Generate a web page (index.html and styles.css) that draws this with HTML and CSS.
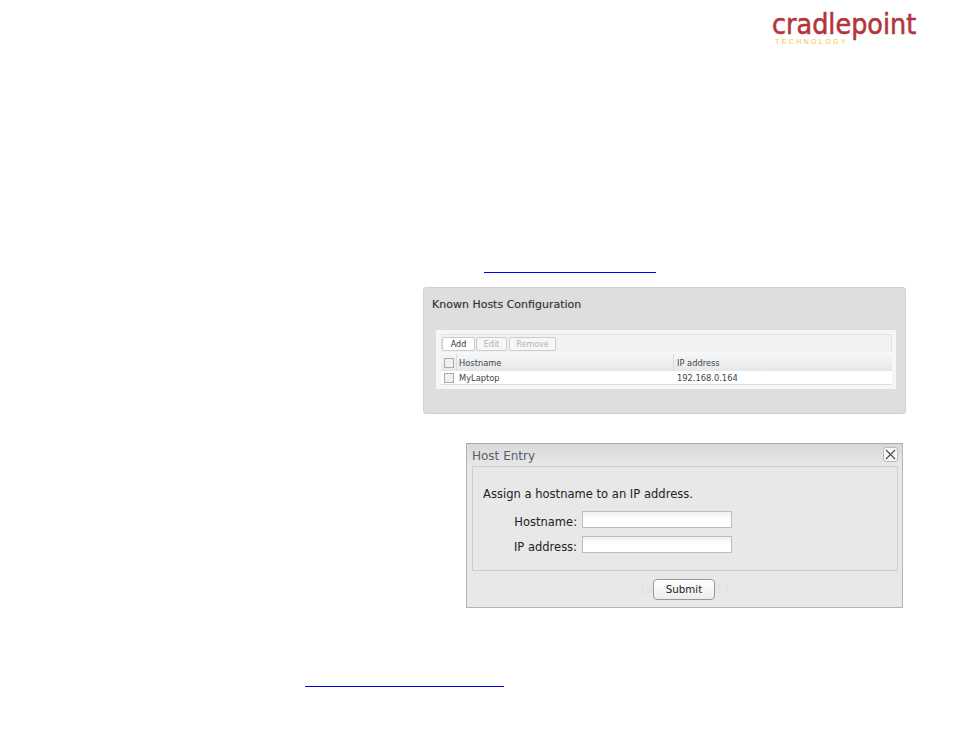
FILE: index.html
```html
<!DOCTYPE html>
<html lang="en">
<head>
    <meta charset="UTF-8">
    <title>Known Hosts - Cradlepoint</title>
    <link rel="stylesheet" href="styles.css">
</head>
<body>
    <header class="logo">
        <div class="logo-name">cradlepoint</div>
        <div class="logo-sub">TECHNOLOGY</div>
    </header>

    <div class="link-line link-top"></div>

    <section class="hosts">
        <h2 class="hosts-title">Known Hosts Configuration</h2>
        <div class="grid-panel">
            <div class="toolbar">
                <button class="tool-btn btn-add">Add</button>
                <button class="tool-btn btn-edit" disabled>Edit</button>
                <button class="tool-btn btn-remove" disabled>Remove</button>
            </div>
            <div class="grid-row grid-head">
                <span class="check-cell"><i class="check"></i></span>
                <span class="name-cell">Hostname</span>
                <span class="ip-cell">IP address</span>
            </div>
            <div class="grid-row grid-body">
                <span class="check-cell"><i class="check"></i></span>
                <span class="name-cell">MyLaptop</span>
                <span class="ip-cell">192.168.0.164</span>
            </div>
        </div>
    </section>

    <section class="dialog">
        <div class="dialog-head">
            <span class="dialog-title">Host Entry</span>
            <button class="close-btn" aria-label="Close">
                <svg width="11" height="11" viewBox="0 0 11 11"><path d="M1 1 L10 10 M10 1 L1 10" stroke="#444" stroke-width="1.1" fill="none"/></svg>
            </button>
        </div>
        <div class="dialog-box">
            <p class="dialog-text">Assign a hostname to an IP address.</p>
            <div class="field"><label>Hostname:</label><input type="text"></div>
            <div class="field"><label>IP address:</label><input type="text"></div>
        </div>
        <div class="dialog-foot">
            <span class="ghost">19</span>
            <button class="submit-btn">Submit</button>
            <span class="ghost">53</span>
        </div>
    </section>

    <div class="link-line link-bottom"></div>
</body>
</html>
```

FILE: styles.css
```css
body {
    margin: 0;
    height: 737px;
    overflow: hidden;
    background: white;
    font-family: "DejaVu Sans", sans-serif;
    color: #333;
}
.logo {
    height: 47px;
    padding: 11px 0 0 772px;
    box-sizing: border-box;
}
.logo-name {
    font-family: "DejaVu Sans", sans-serif;
    font-size: 29px;
    line-height: 26px;
    height: 26px;
    width: 146px;
    color: #b5343a;
    -webkit-text-stroke: 0.6px #b5343a;
    transform: scaleX(0.88);
    transform-origin: left top;
    white-space: nowrap;
}
.logo-sub {
    margin: 1px 0 0 3px;
    font-family: "Liberation Sans", sans-serif;
    font-size: 7px;
    line-height: 8px;
    letter-spacing: 2.4px;
    color: #f1c63a;
}
.link-line {
    height: 1px;
    background: #0000ff;
}
.link-top {
    width: 172px;
    margin: 225px 0 0 484px;
}
.link-bottom {
    width: 199px;
    margin: 78px 0 0 305px;
    background: #0000cc;
}

/* known hosts screenshot */
.hosts {
    width: 483px;
    height: 127px;
    margin: 14px 0 0 423px;
    padding: 1px 9px 0 8px;
    box-sizing: border-box;
    background: #dedede;
    border: 1px solid #d0d0d0;
    border-radius: 3px;
}
.hosts-title {
    margin: 8px 0 18px 0;
    font-size: 11px;
    line-height: 15px;
    font-weight: normal;
    color: #333;
    text-shadow: 0 0 1px #aaa;
}
.grid-panel {
    margin-left: 4px;
    width: 460px;
    height: 59px;
    padding: 4px 4px 0 5px;
    box-sizing: border-box;
    background: #f6f6f6;
}
.toolbar {
    display: flex;
    gap: 1px;
    height: 18px;
    padding: 2px 0 0 0;
    box-sizing: border-box;
    background: #f1f1f1;
    border: 1px solid #e2e2e2;
    border-bottom: none;
}
.tool-btn {
    height: 14px;
    padding: 0;
    font: 8px "DejaVu Sans", sans-serif;
    color: #333;
    background: #f6f6f6;
    border: 1px solid #ccc;
    border-radius: 2px;
}
.tool-btn:disabled {
    color: #b5b5b5;
}
.btn-add { width: 33px; background: white; }
.btn-edit { width: 31px; }
.btn-remove { width: 47px; margin-left: 1px; }
.grid-row {
    display: flex;
    align-items: center;
    font-size: 8.3px;
    color: #444;
}
.grid-head {
    height: 19px;
    padding-top: 2px;
    box-sizing: border-box;
    background: linear-gradient(#f8f8f8, #e4e7ea);
}
.grid-body {
    height: 14px;
    padding-top: 1px;
    box-sizing: border-box;
    background: white;
    border-bottom: 1px solid #ddd;
}
.check-cell {
    width: 15px;
    display: flex;
    justify-content: center;
}
.check {
    width: 8px;
    height: 8px;
    background: #f0f0f0;
    border: 1px solid #aaa;
}
.name-cell {
    width: 217px;
    box-sizing: border-box;
    padding-left: 3px;
}
.ip-cell {
    padding-left: 4px;
    flex: 1;
}
.grid-head .ip-cell,
.grid-head .name-cell {
    height: 17px;
    line-height: 19px;
    border-left: 1px solid #dcdcdc;
}
.grid-head .ip-cell {
    padding-left: 3px;
}
.grid-head .name-cell {
    padding-left: 2px;
}

/* host entry dialog */
.dialog {
    width: 437px;
    height: 165px;
    margin: 29px 0 0 466px;
    box-sizing: border-box;
    background: #e8e8e8;
    border: 1px solid #b4b4b4;
    border-top-color: #aaa;
    padding: 0 4px 0 5px;
}
.dialog-head {
    height: 22px;
    margin: 0 -4px 0 -5px;
    padding: 1px 4px 0 5px;
    box-sizing: border-box;
    display: flex;
    justify-content: space-between;
    align-items: center;
    background: linear-gradient(#d9d9d9, #e8e8e8);
}
.dialog-title {
    font-size: 12px;
    color: #56606a;
}
.close-btn {
    width: 15px;
    height: 15px;
    padding: 0;
    margin-top: -3px;
    display: flex;
    align-items: center;
    justify-content: center;
    background: #f8f8f8;
    border: 1px solid #bbb;
    border-radius: 3px;
}
.dialog-box {
    height: 105px;
    box-sizing: border-box;
    border: 1px solid #cdcdcd;
    padding: 20px 0 0 10px;
}
.dialog-text {
    margin: 0 0 9px 0;
    font-size: 11.55px;
    line-height: 15px;
    color: #222;
}
.field {
    display: flex;
    align-items: center;
    gap: 5px;
    height: 17px;
    margin-bottom: 8px;
}
.field label {
    width: 94px;
    padding-top: 4px;
    text-align: right;
    font-size: 11.5px;
    color: #222;
}
.field input {
    width: 150px;
    height: 17px;
    padding: 0;
    box-sizing: border-box;
    background: linear-gradient(#f0f0f4, #fff 50%);
    border: 1px solid #b9bccb;
}
.dialog-foot {
    display: flex;
    justify-content: center;
    align-items: center;
    padding: 8px 2px 0 0;
}
.ghost {
    font-size: 11px;
    color: #e2e2e2;
}
.submit-btn {
    width: 62px;
    height: 21px;
    padding: 0 0 2px 0;
    font: 10.3px "DejaVu Sans", sans-serif;
    color: #222;
    background: linear-gradient(#fff, #ececec);
    border: 1px solid #999;
    border-radius: 4px;
}
```
